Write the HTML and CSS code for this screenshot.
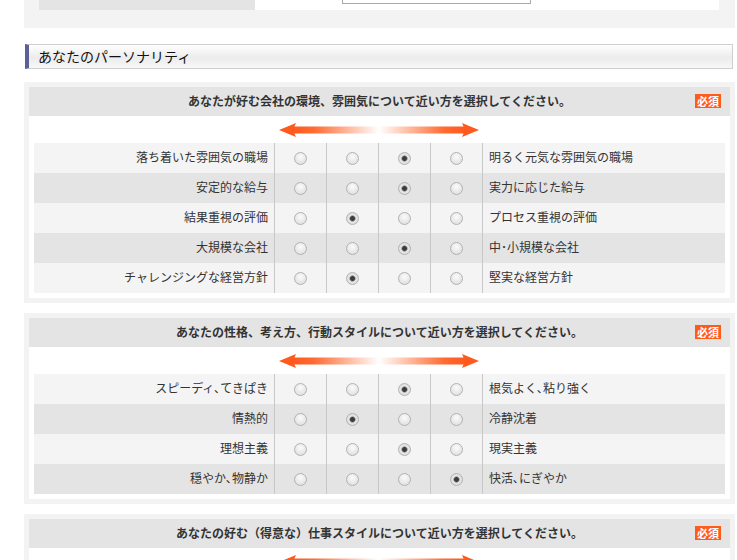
FILE: index.html
```html
<!DOCTYPE html>
<html lang="ja">

<head>
  <meta charset="UTF-8">
  <meta name="viewport" content="width=device-width, initial-scale=1.0">
  <title>あなたのパーソナリティ</title>
  <link rel="stylesheet" href="styles.css">
</head>

<body>
  <div class="page">
    <!-- 前のセクションの末尾 -->
    <div class="prev">
      <div class="prev-row">
        <div class="prev-th"></div>
        <div class="prev-td">
          <div class="select"></div>
        </div>
      </div>
    </div>

    <h2 class="sec-title">あなたのパーソナリティ</h2>

    <!-- 質問1 -->
    <div class="q-box">
      <div class="q-head">あなたが好む会社の環境、雰囲気について近い方を選択してください。<span class="req">必須</span></div>
      <div class="q-body">
        <div class="arrow">
          <svg width="200" height="16" viewBox="0 0 200 16">
            <defs>
              <linearGradient id="g1" x1="0" y1="0" x2="1" y2="0">
                <stop offset="0" stop-color="#ff5a1e" />
                <stop offset="0.12" stop-color="#ff6a30" />
                <stop offset="0.5" stop-color="#ffffff" />
                <stop offset="0.88" stop-color="#ff6a30" />
                <stop offset="1" stop-color="#ff5a1e" />
              </linearGradient>
            </defs>
            <rect x="14" y="4.5" width="172" height="7" fill="url(#g1)" />
            <polygon points="0,8 17,1 14,8 17,15" fill="#ff5a1e" />
            <polygon points="200,8 183,1 186,8 183,15" fill="#ff5a1e" />
          </svg>
        </div>
        <div class="q-row">
          <div class="lbl-l">落ち着いた雰囲気の職場</div>
          <div class="cell"><input type="radio" name="a1"></div>
          <div class="cell"><input type="radio" name="a1"></div>
          <div class="cell"><input type="radio" name="a1" checked></div>
          <div class="cell"><input type="radio" name="a1"></div>
          <div class="lbl-r">明るく元気な雰囲気の職場</div>
        </div>
        <div class="q-row">
          <div class="lbl-l">安定的な給与</div>
          <div class="cell"><input type="radio" name="a2"></div>
          <div class="cell"><input type="radio" name="a2"></div>
          <div class="cell"><input type="radio" name="a2" checked></div>
          <div class="cell"><input type="radio" name="a2"></div>
          <div class="lbl-r">実力に応じた給与</div>
        </div>
        <div class="q-row">
          <div class="lbl-l">結果重視の評価</div>
          <div class="cell"><input type="radio" name="a3"></div>
          <div class="cell"><input type="radio" name="a3" checked></div>
          <div class="cell"><input type="radio" name="a3"></div>
          <div class="cell"><input type="radio" name="a3"></div>
          <div class="lbl-r">プロセス重視の評価</div>
        </div>
        <div class="q-row">
          <div class="lbl-l">大規模な会社</div>
          <div class="cell"><input type="radio" name="a4"></div>
          <div class="cell"><input type="radio" name="a4"></div>
          <div class="cell"><input type="radio" name="a4" checked></div>
          <div class="cell"><input type="radio" name="a4"></div>
          <div class="lbl-r">中･小規模な会社</div>
        </div>
        <div class="q-row">
          <div class="lbl-l">チャレンジングな経営方針</div>
          <div class="cell"><input type="radio" name="a5"></div>
          <div class="cell"><input type="radio" name="a5" checked></div>
          <div class="cell"><input type="radio" name="a5"></div>
          <div class="cell"><input type="radio" name="a5"></div>
          <div class="lbl-r">堅実な経営方針</div>
        </div>
      </div>
    </div>

    <!-- 質問2 -->
    <div class="q-box">
      <div class="q-head">あなたの性格、考え方、行動スタイルについて近い方を選択してください。<span class="req">必須</span></div>
      <div class="q-body">
        <div class="arrow">
          <svg width="200" height="16" viewBox="0 0 200 16">
            <defs>
              <linearGradient id="g2" x1="0" y1="0" x2="1" y2="0">
                <stop offset="0" stop-color="#ff5a1e" />
                <stop offset="0.12" stop-color="#ff6a30" />
                <stop offset="0.5" stop-color="#ffffff" />
                <stop offset="0.88" stop-color="#ff6a30" />
                <stop offset="1" stop-color="#ff5a1e" />
              </linearGradient>
            </defs>
            <rect x="14" y="4.5" width="172" height="7" fill="url(#g2)" />
            <polygon points="0,8 17,1 14,8 17,15" fill="#ff5a1e" />
            <polygon points="200,8 183,1 186,8 183,15" fill="#ff5a1e" />
          </svg>
        </div>
        <div class="q-row">
          <div class="lbl-l">スピーディ､てきぱき</div>
          <div class="cell"><input type="radio" name="b1"></div>
          <div class="cell"><input type="radio" name="b1"></div>
          <div class="cell"><input type="radio" name="b1" checked></div>
          <div class="cell"><input type="radio" name="b1"></div>
          <div class="lbl-r">根気よく､粘り強く</div>
        </div>
        <div class="q-row">
          <div class="lbl-l">情熱的</div>
          <div class="cell"><input type="radio" name="b2"></div>
          <div class="cell"><input type="radio" name="b2" checked></div>
          <div class="cell"><input type="radio" name="b2"></div>
          <div class="cell"><input type="radio" name="b2"></div>
          <div class="lbl-r">冷静沈着</div>
        </div>
        <div class="q-row">
          <div class="lbl-l">理想主義</div>
          <div class="cell"><input type="radio" name="b3"></div>
          <div class="cell"><input type="radio" name="b3"></div>
          <div class="cell"><input type="radio" name="b3" checked></div>
          <div class="cell"><input type="radio" name="b3"></div>
          <div class="lbl-r">現実主義</div>
        </div>
        <div class="q-row">
          <div class="lbl-l">穏やか､物静か</div>
          <div class="cell"><input type="radio" name="b4"></div>
          <div class="cell"><input type="radio" name="b4"></div>
          <div class="cell"><input type="radio" name="b4"></div>
          <div class="cell"><input type="radio" name="b4" checked></div>
          <div class="lbl-r">快活､にぎやか</div>
        </div>
      </div>
    </div>

    <!-- 質問3 -->
    <div class="q-box">
      <div class="q-head">あなたの好む（得意な）仕事スタイルについて近い方を選択してください。<span class="req">必須</span></div>
      <div class="q-body">
        <div class="arrow">
          <svg width="200" height="16" viewBox="0 0 200 16">
            <defs>
              <linearGradient id="g3" x1="0" y1="0" x2="1" y2="0">
                <stop offset="0" stop-color="#ff5a1e" />
                <stop offset="0.12" stop-color="#ff6a30" />
                <stop offset="0.5" stop-color="#ffffff" />
                <stop offset="0.88" stop-color="#ff6a30" />
                <stop offset="1" stop-color="#ff5a1e" />
              </linearGradient>
            </defs>
            <rect x="14" y="4.5" width="172" height="7" fill="url(#g3)" />
            <polygon points="0,8 17,1 14,8 17,15" fill="#ff5a1e" />
            <polygon points="200,8 183,1 186,8 183,15" fill="#ff5a1e" />
          </svg>
        </div>
      </div>
    </div>
  </div>
</body>

</html>
```

FILE: styles.css
```css
* {
  margin: 0;
  padding: 0;
  box-sizing: border-box;
}

body {
  background-color: #fff;
  font-family: "Noto Sans CJK JP", "Noto Sans", sans-serif;
  font-size: 12px;
  color: #333;
}

.page {
  padding-left: 24px;
  width: 737px;
}

/* 前のセクション */
.prev {
  width: 711px;
  padding: 0 16px 18px 15px;
  background-color: #f3f3f3;
}

.prev-row {
  display: flex;
  height: 10px;
}

.prev-th {
  width: 216px;
  background-color: #e4e4e4;
}

.prev-td {
  flex: 1;
  background-color: #fff;
  padding-left: 87px;
}

.select {
  width: 189px;
  height: 4px;
  border: 1px solid #a9a9a9;
  border-top: none;
}

/* 見出し */
.sec-title {
  width: 708px;
  height: 25px;
  margin: 16px 0 0 1px;
  padding-left: 9px;
  border: 1px solid #cfcfcf;
  border-left: 4px solid #5d6095;
  background: linear-gradient(#fff, #ececec 55%, #f7f7f7);
  font-size: 14px;
  font-weight: normal;
  line-height: 22px;
  color: #111;
}

/* 質問ボックス */
.q-box {
  width: 711px;
  margin-top: 13px;
  padding: 5px;
  background-color: #f3f3f3;
}

.q-box + .q-box {
  margin-top: 10px;
}

.q-head {
  position: relative;
  height: 29px;
  background-color: #e4e4e4;
  text-align: center;
  line-height: 28px;
  font-weight: bold;
  color: #333;
}

.req {
  position: absolute;
  right: 9px;
  top: 7px;
  width: 26px;
  height: 14px;
  background-color: #ff5a1a;
  color: #fff;
  font-size: 11px;
  line-height: 14px;
  text-align: center;
}

.q-body {
  background-color: #fff;
  padding: 0 5px 5px;
}

.arrow {
  height: 27px;
  display: flex;
  justify-content: center;
  align-items: center;
}

.arrow svg {
  display: block;
  margin-left: -1px;
}

.q-row {
  display: grid;
  grid-template-columns: 240px repeat(4, 52px) 1fr;
  height: 30px;
  background-color: #f4f4f4;
}

.q-row:nth-child(odd) {
  background-color: #e4e4e4;
}

.lbl-l {
  text-align: right;
  padding-right: 6px;
  line-height: 28px;
}

.lbl-r {
  padding-left: 6px;
  line-height: 28px;
  border-left: 1px solid #c8c8c8;
}

.cell {
  display: flex;
  justify-content: center;
  align-items: center;
  border-left: 1px solid #c8c8c8;
}

.cell input {
  appearance: none;
  -webkit-appearance: none;
  width: 13px;
  height: 13px;
  margin: 0;
  border: 1px solid #b2b2b2;
  border-radius: 50%;
  background: radial-gradient(circle at 50% 35%, #fbfbfb, #dadada);
}

.cell input:checked {
  background: radial-gradient(circle, #3c3c3c 0 2px, #8a8a8a 2.6px, #e6e6e6 3.6px, #d6d6d6);
}
```
